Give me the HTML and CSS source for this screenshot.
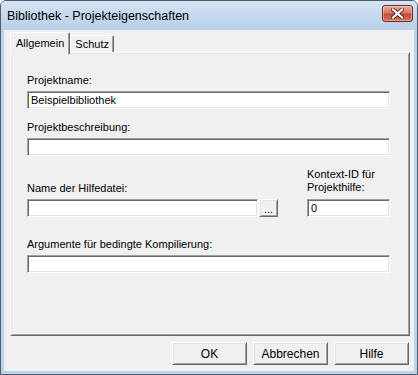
FILE: index.html
```html
<!DOCTYPE html>
<html lang="de">
  <head>
    <meta charset="UTF-8">
    <title>Bibliothek - Projekteigenschaften</title>
    <link rel="stylesheet" href="styles.css">
  </head>
  <body>
<div class="window">
  <div class="titlebar">
    <span class="title">Bibliothek - Projekteigenschaften</span>
    <button class="close" type="button" aria-label="Schließen">
      <svg width="13" height="11" viewBox="0 0 13 11">
        <path d="M2 1.5 L11 9.5 M11 1.5 L2 9.5" stroke="#5a2a24" stroke-width="4" stroke-linecap="square" />
        <path d="M2 1.5 L11 9.5 M11 1.5 L2 9.5" stroke="#ffffff" stroke-width="2.2" stroke-linecap="square" />
      </svg>
    </button>
  </div>

  <div class="client">
    <div class="tabs">
      <div class="tab active">Allgemein</div>
      <div class="tab">Schutz</div>
    </div>

    <div class="panel">
      <div class="field">
        <label for="projName">Projektname:</label>
        <input id="projName" class="textbox" type="text" value="Beispielbibliothek">
      </div>

      <div class="field gap-s">
        <label for="projDesc">Projektbeschreibung:</label>
        <input id="projDesc" class="textbox" type="text" value="">
      </div>

      <div class="field-row">
        <div class="field help-file">
          <label for="helpFile">Name der Hilfedatei:</label>
          <div class="browse">
            <input id="helpFile" class="textbox" type="text" value="">
            <button class="dots" type="button">...</button>
          </div>
        </div>
        <div class="field context-id">
          <label for="ctxId">Kontext-ID für<br>Projekthilfe:</label>
          <input id="ctxId" class="textbox" type="text" value="0">
        </div>
      </div>

      <div class="field gap-l">
        <label for="condArgs">Argumente für bedingte Kompilierung:</label>
        <input id="condArgs" class="textbox" type="text" value="">
      </div>
    </div>

    <div class="buttons">
      <button class="push" type="button">OK</button>
      <button class="push" type="button">Abbrechen</button>
      <button class="push" type="button">Hilfe</button>
    </div>
  </div>
</div>
  </body>
</html>
```

FILE: styles.css
```css
html,
body {
  margin: 0;
  padding: 0;
  background: #ffffff;
}

body {
  font:
    11px "Liberation Sans",
    Arial,
    sans-serif;
  color: #000000;
}

.window {
  box-sizing: border-box;
  width: 418px;
  height: 375px;
  display: flex;
  flex-direction: column;
  background: #bcd3ec;
  border: 1px solid #4d5d70;
  border-radius: 6px 6px 0 0;
  overflow: hidden;
}

.titlebar {
  height: 29px;
  display: flex;
  align-items: center;
  justify-content: space-between;
  padding: 0 4px 0 6px;
  background: linear-gradient(#d6e4f4, #c2d6ed 60%, #bad0e9);
  flex-shrink: 0;
}
.title {
  font:
    12.5px "Liberation Sans",
    Arial,
    sans-serif;
  color: #000000;
  margin-top: 1px;
}
.close {
  align-self: flex-start;
  margin-top: 4px;
  width: 31px;
  height: 17px;
  padding: 0;
  display: flex;
  align-items: center;
  justify-content: center;
  border: 1px solid #6e2a24;
  border-radius: 3px;
  background: linear-gradient(#e9a999, #d77866 45%, #c24a36 55%, #d2765d);
  box-shadow: inset 0 0 0 1px rgba(255, 255, 255, 0.35);
}

.client {
  flex: 1;
  display: flex;
  flex-direction: column;
  margin: 0 3px 3px 3px;
  padding: 2px 4px 6px 6px;
  background: #f0f0f0;
}

/* tab strip */
.tabs {
  display: flex;
  align-items: flex-end;
  height: 20px;
  position: relative;
  z-index: 2;
}
.tab {
  box-sizing: border-box;
  height: 17px;
  padding: 0 4px;
  line-height: 16px;
  background: #f0f0f0;
  border-top: 1px solid #ffffff;
  border-left: 1px solid #ffffff;
  border-right: 1px solid #696969;
  box-shadow: inset -1px 0 0 #a0a0a0;
  border-radius: 2px 2px 0 0;
}
.tab.active {
  height: 22px;
  margin-bottom: -2px;
  padding: 0 5px;
  line-height: 20px;
}

/* tab page */
.panel {
  flex: 1;
  box-sizing: border-box;
  padding: 20px 19px 0 16px;
  border-top: 1px solid #ffffff;
  border-left: 1px solid #ffffff;
  border-right: 1px solid #696969;
  border-bottom: 1px solid #696969;
  box-shadow:
    inset 1px 1px 0 #e3e3e3,
    inset -1px -1px 0 #a0a0a0;
}

.field {
  display: flex;
  flex-direction: column;
}
.field label {
  line-height: 14px;
  margin-bottom: 4px;
}
.context-id label {
  line-height: 13px;
  margin-bottom: 5px;
}
.gap-s {
  margin-top: 11px;
}
.gap-l {
  margin-top: 20px;
}

.field-row {
  display: flex;
  justify-content: space-between;
  align-items: flex-end;
  margin-top: 12px;
}
.help-file {
  width: 251px;
}
.context-id {
  width: 83px;
}
.browse {
  display: flex;
  gap: 1px;
}
.browse .textbox {
  flex: 1;
  min-width: 0;
}

.textbox {
  box-sizing: border-box;
  height: 18px;
  margin: 0;
  padding: 0 3px;
  font:
    11px "Liberation Sans",
    Arial,
    sans-serif;
  color: #000000;
  background: #ffffff;
  border-top: 1px solid #a0a0a0;
  border-left: 1px solid #a0a0a0;
  border-right: 1px solid #ffffff;
  border-bottom: 1px solid #ffffff;
  box-shadow:
    inset 1px 1px 0 #696969,
    inset -1px -1px 0 #e3e3e3;
  outline: none;
}

.dots,
.push {
  box-sizing: border-box;
  margin: 0;
  padding: 0;
  font:
    11px "Liberation Sans",
    Arial,
    sans-serif;
  color: #000000;
  background: #f0f0f0;
  border-top: 1px solid #ffffff;
  border-left: 1px solid #ffffff;
  border-right: 1px solid #696969;
  border-bottom: 1px solid #696969;
  box-shadow:
    inset 1px 1px 0 #e3e3e3,
    inset -1px -1px 0 #a0a0a0;
}
.dots {
  width: 19px;
  height: 18px;
  line-height: 12px;
  padding-top: 2px;
}

.buttons {
  display: flex;
  justify-content: flex-end;
  gap: 6px;
  margin-top: 6px;
  padding-right: 1px;
}
.push {
  width: 75px;
  height: 23px;
  font-size: 12px;
}
```
